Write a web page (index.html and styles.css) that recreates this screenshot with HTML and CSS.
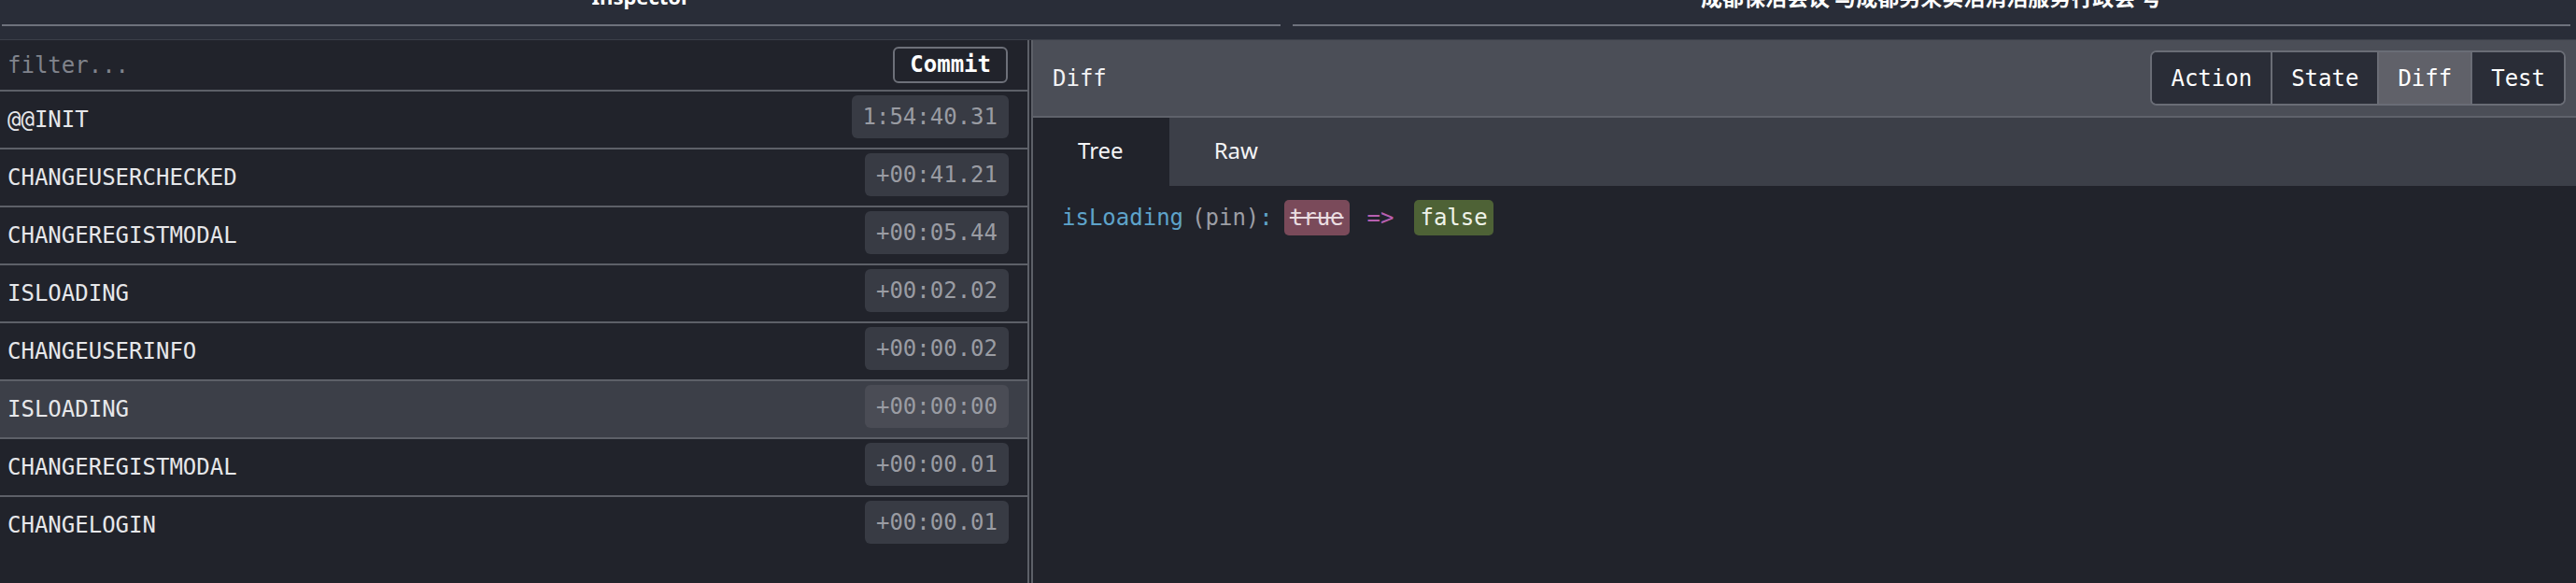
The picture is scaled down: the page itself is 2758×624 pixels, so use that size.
FILE: index.html
```html
<!DOCTYPE html>
<html>
<head>
<meta charset="utf-8">
<title>Inspector</title>
<link rel="stylesheet" href="styles.css">
</head>
<body>
<div class="app">
  <div class="topbar">
    <div class="col-head"><div class="col-title">Inspector</div></div>
    <div class="col-head"><div class="col-title cjk">成都保活会议 与成都另来实活消活服务行政会 号</div></div>
  </div>
  <div class="main">
    <div class="left">
      <div class="filter-row">
        <input class="filter" type="text" placeholder="filter...">
        <button class="commit">Commit</button>
      </div>
      <div class="rows">
        <div class="row"><span class="name">@@INIT</span><span class="time">1:54:40.31</span></div>
        <div class="row"><span class="name">CHANGEUSERCHECKED</span><span class="time">+00:41.21</span></div>
        <div class="row"><span class="name">CHANGEREGISTMODAL</span><span class="time">+00:05.44</span></div>
        <div class="row"><span class="name">ISLOADING</span><span class="time">+00:02.02</span></div>
        <div class="row"><span class="name">CHANGEUSERINFO</span><span class="time">+00:00.02</span></div>
        <div class="row selected"><span class="name">ISLOADING</span><span class="time">+00:00:00</span></div>
        <div class="row"><span class="name">CHANGEREGISTMODAL</span><span class="time">+00:00.01</span></div>
        <div class="row"><span class="name">CHANGELOGIN</span><span class="time">+00:00.01</span></div>
      </div>
    </div>
    <div class="right">
      <div class="rhead">
        <span class="rtitle">Diff</span>
        <div class="btns">
          <button class="btn">Action</button>
          <button class="btn">State</button>
          <button class="btn active">Diff</button>
          <button class="btn">Test</button>
        </div>
      </div>
      <div class="tabs">
        <div class="tab active">Tree</div>
        <div class="tab">Raw</div>
      </div>
      <div class="diff">
        <div class="diff-line">
          <span class="key">isLoading</span><span class="pin">(pin)</span><span class="colon">:</span><span class="old">true</span><span class="arrow">=&gt;</span><span class="new">false</span>
        </div>
      </div>
    </div>
  </div>
</div>
</body>
</html>
```

FILE: styles.css
```css
html, body {
  margin: 0;
  padding: 0;
  background: #21232b;
  height: 100%;
  overflow: hidden;
}

.app {
  display: flex;
  flex-direction: column;
  height: 624px;
  font-family: "DejaVu Sans Mono", "Liberation Mono", monospace;
  font-size: 24px;
  color: #e6e7ea;
}

.topbar {
  height: 42px;
  background: #292d38;
  display: flex;
  gap: 13px;
  padding: 0 6px 0 2px;
  overflow: hidden;
  flex: none;
}

.col-head {
  flex: 1;
  height: 26px;
  border-bottom: 2px solid #6e727c;
}

.col-title {
  margin-top: -15px;
  font-family: "Noto Sans", "Noto Sans CJK SC", sans-serif;
  font-weight: 700;
  font-size: 22px;
  line-height: 22px;
  text-align: center;
  color: #ffffff;
  white-space: pre;
}

.col-title.cjk {
  font-family: "Noto Sans CJK SC", "Noto Sans", sans-serif;
  font-size: 23px;
}

.main {
  flex: 1;
  display: flex;
  border-top: 1px solid #3b3f49;
  min-height: 0;
}

.left {
  width: 1102px;
  flex: none;
  box-sizing: border-box;
  border-right: 2px solid #5d6068;
  margin-right: 2px;
  background: #21232b;
}

.filter-row {
  height: 53px;
  border-bottom: 2px solid #5d6068;
  display: flex;
  align-items: center;
  justify-content: space-between;
  padding: 0 21px 0 8px;
}

.filter {
  flex: 1;
  background: transparent;
  border: none;
  outline: none;
  padding: 0;
  font-family: inherit;
  font-size: 24px;
  color: #e6e7ea;
}

.filter::placeholder {
  color: #80838c;
}

.commit {
  height: 39px;
  box-sizing: border-box;
  padding: 0 16px;
  border: 2px solid #6d7079;
  border-radius: 6px;
  background: transparent;
  color: #ffffff;
  font-family: inherit;
  font-size: 24px;
  font-weight: 700;
  line-height: 35px;
}

.row {
  height: 60px;
  border-bottom: 2px solid #5d6068;
  display: flex;
  justify-content: space-between;
  align-items: flex-start;
  padding: 0 20px 0 8px;
}

.row:last-child {
  border-bottom: none;
}

.row.selected {
  background: #3c3f48;
}

.name {
  line-height: 60px;
  color: #e6e7ea;
}

.time {
  margin-top: 4px;
  height: 46px;
  line-height: 46px;
  padding: 0 12px;
  border-radius: 6px;
  background: #383b44;
  color: #9a9ca3;
}

.row.selected .time {
  background: #4a4c55;
}

.right {
  flex: 1;
  box-sizing: border-box;
  border-left: 2px solid #5d6068;
  background: #21232b;
  display: flex;
  flex-direction: column;
}

.rhead {
  height: 81px;
  background: #4b4e57;
  border-bottom: 2px solid #5f626b;
  display: flex;
  align-items: center;
  justify-content: space-between;
  padding: 0 11px 0 21px;
}

.rtitle {
  color: #f2f2f4;
}

.btns {
  display: flex;
  height: 59px;
  box-sizing: border-box;
  border: 2px solid #6a6d76;
  border-radius: 7px;
  overflow: hidden;
  background: #2a2d37;
}

.btn {
  border: none;
  border-left: 2px solid #6a6d76;
  background: #2a2d37;
  color: #ffffff;
  font-family: inherit;
  font-size: 24px;
  padding: 0 20px;
  margin: 0;
}

.btn:first-child {
  border-left: none;
}

.btn.active {
  background: #606169;
}

.tabs {
  height: 73px;
  background: #3c3f48;
  display: flex;
}

.tab {
  padding: 0 49px 0 48px;
  line-height: 70px;
  font-family: "Noto Sans", sans-serif;
  font-size: 24px;
  color: #f4f4f6;
}

.tab.active {
  background: #21232b;
}

.diff {
  padding: 15px 31px;
}

.diff-line {
  display: flex;
  align-items: center;
  height: 38px;
}

.key {
  color: #5ea3ca;
}

.pin {
  margin-left: 9px;
  color: #9c9ea5;
}

.colon {
  color: #5ea3ca;
}

.old {
  margin-left: 12px;
  height: 38px;
  line-height: 38px;
  padding: 0 6px;
  border-radius: 5px;
  background: #7a4a5a;
  color: #eadde1;
  text-decoration: line-through;
}

.arrow {
  margin: 0 22px 0 19px;
  color: #b65fb0;
}

.new {
  height: 38px;
  line-height: 38px;
  padding: 0 6px;
  border-radius: 5px;
  background: #4e6236;
  color: #eef2e8;
}
```
